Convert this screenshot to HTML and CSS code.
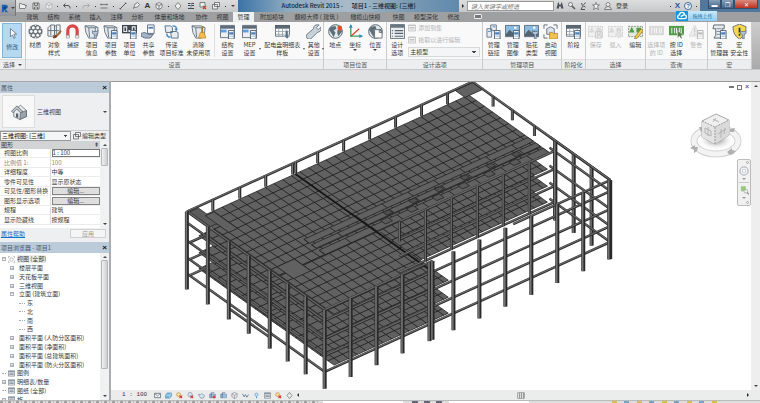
FILE: index.html
```html
<!DOCTYPE html>
<html lang="zh-CN">
<head>
<meta charset="utf-8">
<title>Autodesk Revit 2015</title>
<link rel="stylesheet" href="styles.css">
</head>
<body>
<svg class="sprite" aria-hidden="true">
  <symbol id="cursor" viewBox="0 0 16 16"><path d="M5 1v12l3-3 2 5 2-1-2-5h4z" fill="#fff" stroke="#4a5a6a"/></symbol>
  <symbol id="material" viewBox="0 0 16 16"><circle cx="8" cy="8" r="7.5" fill="#687078"/><g fill="#f4f6f8"><circle cx="8" cy="8" r="1.8"/><circle cx="3.5" cy="8" r="1.5"/><circle cx="12.5" cy="8" r="1.5"/><circle cx="5.7" cy="4" r="1.6"/><circle cx="10.3" cy="4" r="1.6"/><circle cx="5.7" cy="12" r="1.6"/><circle cx="10.3" cy="12" r="1.6"/><circle cx="8" cy="1.3" r=".8"/><circle cx="8" cy="14.7" r=".8"/><circle cx="2" cy="4.5" r=".8"/><circle cx="14" cy="4.5" r=".8"/><circle cx="2" cy="11.5" r=".8"/><circle cx="14" cy="11.5" r=".8"/></g></symbol>
  <symbol id="style" viewBox="0 0 16 16"><path d="M1 4l3-3h4v10l-2 2H1zM8 3l2-2h4v9l-2 2H8zM1 7h12M4 1v11M10 1v10" fill="#eef1f4" stroke="#667481"/><path d="M15 7l-5 6" stroke="#a76532" stroke-width="2"/><path d="M6 15q1-4 4-3l1 1q-1 3-5 2z" fill="#784020"/></symbol>
  <symbol id="magnet" viewBox="0 0 16 16"><path d="M3 14V7a5 5 0 0110 0v7" fill="none" stroke="#d84848" stroke-width="3.4"/><path d="M1.3 12h3.4v3H1.3zM11.3 12h3.4v3h-3.4z" fill="#eee" stroke="#888" stroke-width=".6"/></symbol>
  <symbol id="project" viewBox="0 0 16 16"><path d="M1 2h10l4 2-1 9-3 2H5L2 9z" fill="#e5e9ed" stroke="#687580"/><path d="M1 2l4 2h7l2-1M5 4l1 10M12 4v9" fill="none" stroke="#687580"/></symbol>
  <symbol id="wrenchmini" viewBox="0 0 16 16"><path d="M9 7v3l2 1v5h2v-5l2-1V7l-1 1h-4z" fill="#b5c5d8" stroke="#51677f" stroke-width=".7"/></symbol>
  <symbol id="sheetmini" viewBox="0 0 16 16"><path d="M9 7h6v9H9z" fill="#fff" stroke="#4b6076"/><path d="M10 9h4v2h-4zM10 13h4" fill="#4c83b9" stroke="#4c83b9" stroke-width=".6"/></symbol>
  <symbol id="units" viewBox="0 0 16 16"><path d="M0 1h16v9H0z" fill="#3f464d"/><path d="M2 3h3v5H2zM11 3h3v5h-3zM7.5 7h1v1h-1z" fill="none" stroke="#e8ecef" stroke-width="1.2"/></symbol>
  <symbol id="shared" viewBox="0 0 16 16"><path d="M7 1h7v9H7z" fill="#fff" stroke="#586b80"/><path d="M8 3h5v2H8z" fill="#4f7fae"/><path d="M0 10l4-1 4 2h5l-3 4H4l-4-2z" fill="#a5b4c4" stroke="#607083"/></symbol>
  <symbol id="transfer" viewBox="0 0 16 16"><path d="M1 2h6l2 2v5H2zM7 8h6l2 1v6H8z" fill="#e7edf2" stroke="#5b7185"/><path d="M9 2q5 0 4 4M3 10q0 4 4 4" fill="none" stroke="#4088c4" stroke-width="1.5"/><path d="M11 5h4l-2 3z" fill="#4088c4"/></symbol>
  <symbol id="broom" viewBox="0 0 16 16"><path d="M12 3v7" stroke="#ad6f28" stroke-width="1.6"/><path d="M10 9h4l2 6H8z" fill="#f1bd4d" stroke="#b78127" stroke-width=".7"/></symbol>
  <symbol id="window" viewBox="0 0 16 16"><path d="M.5 1.5h15v13H.5z" fill="#eef1f3" stroke="#65717d"/><path d="M1 2h14v3H1z" fill="#5e6c79"/><path d="M1 6h6v3H1z" fill="#5d9de0"/></symbol>
  <symbol id="table" viewBox="0 0 16 16"><path d="M.5 2h15v11H.5z" fill="#fff" stroke="#65717d"/><path d="M0 1h16v4H0z" fill="#596671"/><path d="M1 8h14M1 11h14M4 4v9M8 4v9M12 4v9" stroke="#8c98a4" stroke-width=".8"/></symbol>
  <symbol id="insert" viewBox="0 0 16 16"><path d="M11 7h3v5h2l-3 4-4-4h2z" fill="#5b7186" stroke="#fff" stroke-width=".5"/></symbol>
  <symbol id="wrench" viewBox="0 0 16 16"><path d="M14 1l-3 3 2 2 3-3q1 5-4 6L5 16q-2 1-4-1t0-4l7-6q0-5 6-4z" fill="#c9d2da" stroke="#596c7e" stroke-width=".9"/></symbol>
  <symbol id="globe" viewBox="0 0 16 16"><circle cx="8" cy="8" r="7.3" fill="#dfe8ec" stroke="#52616b"/><path d="M3 3l5-1 1 3-3 2 2 2-2 5-3-5-2-3zM10 6l4-1 1 3-4 5-1-3z" fill="#5d7079"/></symbol>
  <symbol id="pin" viewBox="0 0 16 16"><path d="M12 9l-2-5a2.5 2.5 0 015 0z" fill="#e14f2b"/></symbol>
  <symbol id="page" viewBox="0 0 16 16"><path d="M7 6h5l3 3v6H7z" fill="#fafafa" stroke="#66727d"/><path d="M12 6v3h3" fill="none" stroke="#66727d"/></symbol>
  <symbol id="axes" viewBox="0 0 16 16"><path d="M3 1v12h12" fill="none" stroke="#39a153" stroke-width="1.4"/><path d="M3 13l9-8" stroke="#d8402f" stroke-width="1.3"/><path d="M3 0L1 4h4zM16 13l-4-2v4z" fill="#3c82c4"/></symbol>
  <symbol id="options" viewBox="0 0 16 16"><path d="M.5 .5h15v15H.5z" fill="#e9edf0" stroke="#697681"/><path d="M1 1h14v3H1z" fill="#687681"/><path d="M5 7h9M5 10h9M5 13h9M2 7h1M2 10h1M2 13h1" stroke="#57646f" stroke-width="1.2"/></symbol>
  <symbol id="link" viewBox="0 0 16 16"><path d="M1 5h5v9H1zM5 1h6v6H5z" fill="#e9edf1" stroke="#67788a"/><path d="M2 8h3M7 3h3" stroke="#5790c5"/></symbol>
  <symbol id="image" viewBox="0 0 16 16"><path d="M.5 1.5h15v12H.5z" fill="#8bbbe0" stroke="#5f6e7c"/><path d="M1 11l4-5 3 3 3-2 4 4v2H1z" fill="#53636f"/><circle cx="11" cy="4" r="1.4" fill="#fff"/></symbol>
  <symbol id="startup" viewBox="0 0 16 16"><path d="M1 5V1h4M11 1h4v4M1 11v4h4" fill="none" stroke="#667"/><path d="M4 5l4-2 4 2v6H4z" fill="#dce2e8" stroke="#68798a"/><path d="M7 9h3l1 1h5v6H7z" fill="#f0c14c" stroke="#a77f25" stroke-width=".7"/></symbol>
  <symbol id="selection" viewBox="0 0 16 16"><path d="M.5 2.5h15v11H.5z" fill="#e2e9df" stroke="#8a968a" stroke-dasharray="2 1"/><path d="M1 9l3-6 3 6zM9 4h5v5H9z" fill="currentColor"/></symbol>
  <symbol id="pencil" viewBox="0 0 16 16"><path d="M14 5l-6 8-1 3 3-1 6-8z" fill="#f2cc4d" stroke="#9b7525" stroke-width=".8"/></symbol>
  <symbol id="save" viewBox="0 0 16 16"><path d="M8 8h7v7H8zM10 8v3h3V8M10 15v-3h4v3" fill="#ddd" stroke="#999"/></symbol>
  <symbol id="load" viewBox="0 0 16 16"><path d="M10 6h3v5h2l-4 4-3-4h2z" fill="#ccc" stroke="#999" stroke-width=".6"/></symbol>
  <symbol id="barcode" viewBox="0 0 16 16"><path d="M0 2h16v10H0z" fill="currentColor"/><path d="M3 4v6M6 4v6M8 4v6M11 4v6M13 4v6" stroke="#fff" stroke-width=".9"/></symbol>
  <symbol id="arrow" viewBox="0 0 16 16"><path d="M9 7v8l2-2 2 3 1-1-1-3h3z" fill="#4f7e46" stroke="#fff" stroke-width=".5"/></symbol>
  <symbol id="warn" viewBox="0 0 16 16"><path d="M6 1l6 12H0z" fill="#ddd" stroke="#bbb"/><path d="M6 4v5M6 10v2" stroke="#999" stroke-width="1.4"/></symbol>
  <symbol id="macro" viewBox="0 0 16 16"><path d="M2 1h11v4h-2v10H2l2-3V5H1z" fill="#e7eaed" stroke="#59656f"/><path d="M5 5h5M5 8h5M5 11h4" stroke="#7c8995"/></symbol>
  <symbol id="shield" viewBox="0 0 16 16"><path d="M8 0l7 3q0 9-7 13Q1 12 1 3z" fill="#f5d84b" stroke="#677079"/><path d="M8 4v5M8 10.5v2" stroke="#333" stroke-width="1.8"/></symbol>
  <symbol id="home" viewBox="0 0 24 24"><path d="M3 11L14 3l8 7v8l-9 4-8-4v-7z" fill="#e8eaec" stroke="#646c73"/><path d="M2 11l7-7 8 7-3 2-5-5-5 5z" fill="#bfc6cb" stroke="#596169"/><path d="M14 13l8-3v8l-9 4z" fill="#9aa4ac" stroke="#5d656d"/><path d="M8 14h3v6l-3-1z" fill="#56616a"/></symbol>
  <symbol id="glass" viewBox="0 0 16 16"><circle cx="5" cy="5" r="4" fill="#eee" stroke="#555" stroke-width="1.4"/><path d="M8 8l6 6" stroke="#555" stroke-width="3"/></symbol>
  <symbol id="binoculars" viewBox="0 0 16 16"><path d="M4 1h2v4h4V1h2l3 12h-5V9H6v4H1z" fill="#4d5359"/></symbol>
  <symbol id="star" viewBox="0 0 16 16"><path d="M8 1l2 5h5l-4 3 2 6-5-3-5 3 2-6-4-3h5z" fill="#f5f5f5" stroke="#555" stroke-width="1.3"/></symbol>
  <symbol id="user" viewBox="0 0 16 16"><circle cx="8" cy="5" r="4" fill="#eee" stroke="#555" stroke-width="1.3"/><path d="M1 15q1-6 7-6t7 6z" fill="#ddd" stroke="#555" stroke-width="1.3"/></symbol>
  <symbol id="dish" viewBox="0 0 16 16"><path d="M3 2q0 7 8 8M11 1L7 6M5 9l-3 6h8" fill="none" stroke="#555" stroke-width="2"/></symbol>
  <symbol id="folder" viewBox="0 0 16 16"><path d="M1 13V3h4l1 2h6v2h3l-3 6z" fill="#eee" stroke="#555" stroke-width="1.3"/></symbol>
  <symbol id="disk" viewBox="0 0 16 16"><path d="M2 2h12v12H2zM5 2v5h6V2M5 14v-4h6v4" fill="#eee" stroke="#555" stroke-width="1.6"/></symbol>
  <symbol id="cube" viewBox="0 0 16 16"><path d="M8 1l6 3v7l-6 4-6-4V4zM2 4l6 4 6-4M8 8v7" fill="#eee" stroke="currentColor" stroke-width="1.3"/></symbol>
  <symbol id="undo" viewBox="0 0 16 16"><path d="M5 3L1 7l4 4M1 7h9q5 0 4 6" fill="none" stroke="currentColor" stroke-width="2"/></symbol>
  <symbol id="measure" viewBox="0 0 16 16"><path d="M1 5h14M1 12h14M2 3v4M14 3v4" stroke="#666" stroke-width="1.6"/></symbol>
  <symbol id="slash" viewBox="0 0 16 16"><path d="M2 14L14 2M1 12l3 3M12 1l3 3" stroke="#555" stroke-width="2"/></symbol>
  <symbol id="tag" viewBox="0 0 16 16"><path d="M3 13l3-9 5-3 4 4-4 5-6 1z" fill="#eee" stroke="#555" stroke-width="1.4"/></symbol>
  <symbol id="section" viewBox="0 0 16 16"><path d="M8 1l6 7-6 7-6-7z" fill="#eee" stroke="#666" stroke-width="1.5"/></symbol>
  <symbol id="lines" viewBox="0 0 16 16"><path d="M2 3h5M2 7h5M2 13h12M9 3h5M9 7h5" stroke="#444" stroke-width="2"/><path d="M7 13L10 1" stroke="#4586bd" stroke-width="1.4"/></symbol>
  <symbol id="closeviews" viewBox="0 0 16 16"><path d="M2 1h10v9H2z" fill="#eee" stroke="#555" stroke-width="1.4"/><path d="M8 8l6 6M14 8l-6 6" stroke="#d83a32" stroke-width="2.5"/></symbol>
  <symbol id="switch" viewBox="0 0 16 16"><path d="M5 1h10v8H5zM1 5h10v9H1z" fill="#eee" stroke="#555" stroke-width="1.4"/></symbol>
  <symbol id="sheet" viewBox="0 0 16 16"><path d="M1 2h14v12H1z" fill="#eef1f4" stroke="#667381" stroke-width="1.4"/><path d="M1 3h14M3 7h10M3 10h10" stroke="#778491" stroke-width="2"/></symbol>
  <symbol id="detail" viewBox="0 0 16 16"><path d="M1 3h14v10H1z" fill="#f4f5f6" stroke="#5d6770" stroke-width="1.8"/><path d="M2 4l6 5 6-5" fill="none" stroke="#5d6770" stroke-width="1.6"/></symbol>
  <symbol id="viewicon" viewBox="0 0 16 16"><path d="M1 5V1h3M12 1h3v4M1 11v4h3M12 15h3v-4" fill="none" stroke="#777"/><circle cx="8" cy="8" r="4" fill="#fff" stroke="#777"/></symbol>
  <symbol id="box3d" viewBox="0 0 16 16"><path d="M1 7l4-5h10v7l-4 5H1z" fill="#73b8dd" stroke="#3b6c99"/><path d="M1 7h10l4-5M11 7v7" fill="none" stroke="#fff"/></symbol>
  <symbol id="sunoff" viewBox="0 0 16 16"><circle cx="6" cy="6" r="4.5" fill="#ffe49a" stroke="#bf8534" stroke-width="1.4"/><path d="M8 8l6 6M14 8l-6 6" stroke="#d7372f" stroke-width="2.4"/></symbol>
  <symbol id="shadowoff" viewBox="0 0 16 16"><circle cx="7" cy="6" r="5" fill="#dce8f1" stroke="#6d8598" stroke-width="1.4"/><path d="M8 8l6 6M14 8l-6 6" stroke="#d7372f" stroke-width="2.4"/></symbol>
  <symbol id="kettle" viewBox="0 0 16 16"><path d="M1 5l4 1q3-4 7 0l3 2-3 6H6L3 9z" fill="#dae6ee" stroke="#5a7f9b" stroke-width="1.3"/></symbol>
  <symbol id="crop" viewBox="0 0 16 16"><path d="M1 5h14v8H1z" fill="#9ec0df" stroke="#5379a1"/><path d="M5 14V2h7" stroke="#435e7e" fill="none" stroke-width="1.6"/></symbol>
  <symbol id="cross" viewBox="0 0 16 16"><path d="M9 9l5 5M14 9l-5 5" stroke="#d7372f" stroke-width="2.4"/></symbol>
  <symbol id="bulb" viewBox="0 0 16 16"><circle cx="8" cy="6" r="3.5" fill="#d8efff" stroke="#4187bd" stroke-width="1.4"/><path d="M7 10h2v4H7z" fill="#4187bd"/></symbol>
  <symbol id="glasses" viewBox="0 0 16 16"><path d="M1 4l4 7 3-5 3 6 4-6" fill="none" stroke="#5e7a8e" stroke-width="2"/></symbol>
</svg>

<header class="titlebar">
  <button class="app-button" aria-label="应用程序菜单"><svg viewBox="0 0 16 16"><path d="M3 14V2h6q5 1 3 5l-3 2 4 5H9L6 9v5z" fill="#1c5eb8"/><path d="M3 14l3-4V5h3q2 1 0 3L6 9" fill="#0b3d83"/></svg><i class="caret"></i></button>
  <nav class="quick" aria-label="快速访问">
    <svg><use href="#folder"/></svg><svg><use href="#disk"/></svg><svg class="dim"><use href="#cube"/></svg><i class="dot"></i><svg><use href="#undo"/></svg><i class="dot"></i><svg class="dim flip"><use href="#undo"/></svg><i class="dot"></i><svg><use href="#measure"/></svg><i class="dot"></i><svg><use href="#slash"/></svg><svg><use href="#tag"/></svg><b class="letter">A</b><svg><use href="#cube"/></svg><i class="dot"></i><svg><use href="#section"/></svg><svg><use href="#lines"/></svg><svg><use href="#closeviews"/></svg><svg><use href="#switch"/></svg><i class="dot"></i><i class="caret"></i>
  </nav>
  <h1 class="title"><span>Autodesk Revit 2015 -</span><span>项目1 - 三维视图: {三维}</span></h1>
  <div class="search"><i class="play"></i><input aria-label="搜索" placeholder="键入关键字或短语"></div>
  <nav class="account"><svg><use href="#binoculars"/></svg><svg><use href="#glass"/></svg><svg><use href="#dish"/></svg><svg><use href="#star"/></svg><svg><use href="#user"/></svg><a href="#login">登录</a></nav>
  <div class="help"><i class="dot"></i><b class="exchange">X</b><span class="question">?</span><i class="dot"></i></div>
  <div class="wincontrols"><button aria-label="最小化">▬</button><button aria-label="还原">❐</button><button class="close" aria-label="关闭">✕</button></div>
  <button class="upload"><i><svg viewBox="0 0 16 16"><path d="M4 12a3 3 0 010-6 4 4 0 018 0 3 3 0 010 6zM6 9l5-3" fill="none" stroke="#fff" stroke-width="2"/></svg></i><span>拖拽上传</span></button>
</header>

<nav class="tabs">
  <a href="#t">建筑</a><a href="#t">结构</a><a href="#t">系统</a><a href="#t">插入</a><a href="#t">注释</a><a href="#t">分析</a><a class="wide" href="#t">体量和场地</a><a href="#t">协作</a><a href="#t">视图</a><a class="active" href="#t">管理</a><a class="addon" href="#t">附加模块</a><a class="master" href="#t">翻模大师 ( 建筑 )</a><a class="olive" href="#t">橄榄山快模</a><a href="#t">快图</a><a class="deep" href="#t">模型深化</a><a href="#t">修改</a><span class="tabmenu"></span>
</nav>

<section class="ribbon">
  <div class="panel p-select"><div class="tools"><button class="modify"><svg><use href="#cursor"/></svg><span>修改</span></button></div><h2>选择 <i class="caret"></i></h2></div>
  <div class="panel p-settings"><div class="tools">
    <button><svg><use href="#material"/></svg><span>材质</span></button>
    <button><svg><use href="#style"/></svg><span>对象<br>样式</span></button>
    <button><svg><use href="#magnet"/></svg><span>捕捉</span></button>
    <button><svg><use href="#project"/><use href="#wrenchmini"/></svg><span>项目<br>信息</span></button>
    <button><svg><use href="#project"/><use href="#sheetmini"/></svg><span>项目<br>参数</span></button>
    <button><svg><use href="#units"/><use href="#sheetmini"/></svg><span>项目<br>单位</span></button>
    <button><svg><use href="#shared"/></svg><span>共享<br>参数</span></button>
    <button class="w27"><svg><use href="#transfer"/></svg><span>传递<br>项目标准</span></button>
    <button class="w27"><svg><use href="#project"/><use href="#broom"/></svg><span>清除<br>未使用项</span></button>
    <i class="divider"></i>
    <button class="w22"><svg><use href="#window"/><use href="#sheetmini"/></svg><span>结构<br>设置</span></button>
    <button class="w22 more"><svg><use href="#window"/><use href="#sheetmini"/></svg><span>MEP<br>设置</span></button>
    <button class="w44 more"><svg><use href="#table"/><use href="#insert"/></svg><span>配电盘明细表<br>样板</span></button>
    <button class="more"><svg><use href="#wrench"/></svg><span>其他<br>设置</span></button>
  </div><h2>设置</h2></div>
  <div class="panel p-location"><div class="tools">
    <button><svg><use href="#globe"/><use href="#pin"/></svg><span>地点</span></button>
    <button><svg><use href="#axes"/></svg><span>坐标</span><i class="caret"></i></button>
    <button><svg><use href="#globe"/><use href="#page"/></svg><span>位置</span><i class="caret"></i></button>
  </div><h2>项目位置</h2></div>
  <div class="panel p-design"><div class="tools">
    <button><svg><use href="#options"/></svg><span>设计<br>选项</span></button>
    <div class="stack"><button disabled><svg><use href="#sheet"/></svg>添加到集</button><button disabled><svg><use href="#sheet"/></svg>拾取以进行编辑</button><select aria-label="设计选项"><option>主模型</option></select></div>
  </div><h2>设计选项</h2></div>
  <div class="panel p-manage"><div class="tools">
    <button><svg><use href="#link"/><use href="#sheetmini"/></svg><span>管理<br>链接</span></button>
    <button><svg><use href="#image"/><use href="#sheetmini"/></svg><span>管理<br>图像</span></button>
    <button><svg><use href="#image"/><use href="#wrenchmini"/></svg><span>贴花<br>类型</span></button>
    <button><svg><use href="#startup"/></svg><span>启动<br>视图</span></button>
  </div><h2>管理项目</h2></div>
  <div class="panel p-phase"><div class="tools"><button><svg><use href="#table"/><use href="#sheetmini"/></svg><span>阶段</span></button></div><h2>阶段化</h2></div>
  <div class="panel p-set"><div class="tools">
    <button disabled><svg><use href="#selection"/><use href="#save"/></svg><span>保存</span></button>
    <button disabled><svg><use href="#selection"/><use href="#load"/></svg><span>载入</span></button>
    <button><svg class="green"><use href="#selection"/><use href="#pencil"/></svg><span>编辑</span></button>
  </div><h2>选择</h2></div>
  <div class="panel p-query"><div class="tools">
    <button disabled><svg><use href="#barcode"/></svg><span>选择项<br>的 ID</span></button>
    <button><svg class="green"><use href="#barcode"/><use href="#arrow"/></svg><span>按 ID<br>选择</span></button>
    <button disabled><svg><use href="#warn"/><use href="#sheetmini"/></svg><span>警告</span></button>
  </div><h2>查询</h2></div>
  <div class="panel p-macro"><div class="tools">
    <button><svg><use href="#macro"/><use href="#sheetmini"/></svg><span>宏<br>管理器</span></button>
    <button><svg><use href="#shield"/><use href="#wrenchmini"/></svg><span>宏<br>安全性</span></button>
  </div><h2>宏</h2></div>
</section>

<main class="workspace">
  <aside class="sidebar">
    <section class="properties">
      <h2 class="palette-title">属性 <button aria-label="关闭属性">×</button></h2>
      <div class="type"><span class="thumb"><svg><use href="#home"/></svg></span><span>三维视图</span><i class="caret"></i></div>
      <div class="instance"><select aria-label="实例"><option>三维视图: {三维}</option></select><button><svg><use href="#switch"/></svg>编辑类型</button></div>
      <div class="scrollbox">
        <div class="propview">
          <h3>图形 <span>⇞</span></h3>
          <table>
            <tr><th><label for="scale">视图比例</label></th><td><input id="scale" value="1 : 100"></td></tr>
            <tr class="muted"><th>比例值 1:</th><td>100</td></tr>
            <tr><th>详细程度</th><td>中等</td></tr>
            <tr><th>零件可见性</th><td>显示原状态</td></tr>
            <tr><th>可见性/图形替换</th><td><button>编辑...</button></td></tr>
            <tr><th>图形显示选项</th><td><button>编辑...</button></td></tr>
            <tr><th>规程</th><td>建筑</td></tr>
            <tr><th>显示隐藏线</th><td>按规程</td></tr>
          </table>
        </div>
        <div class="scrollbar"><i class="up"></i><b class="short"></b><i class="caret"></i></div>
      </div>
      <footer><a href="#help">属性帮助</a><button disabled>应用</button></footer>
    </section>
    <section class="browser">
      <h2 class="palette-title">项目浏览器 - 项目1 <button aria-label="关闭项目浏览器">×</button></h2>
      <div class="scrollbox">
        <ul class="tree">
          <li><i class="node">−</i><svg><use href="#viewicon"/></svg><span class="current">视图 (全部)</span></li>
          <li class="l1"><i class="node">+</i><span>楼层平面</span></li>
          <li class="l1"><i class="node">+</i><span>天花板平面</span></li>
          <li class="l1"><i class="node">+</i><span>三维视图</span></li>
          <li class="l1"><i class="node">−</i><span>立面 (建筑立面)</span></li>
          <li class="l2"><span>东</span></li><li class="l2"><span>北</span></li><li class="l2"><span>南</span></li><li class="l2"><span>西</span></li>
          <li class="l1"><i class="node">+</i><span>面积平面 (人防分区面积)</span></li>
          <li class="l1"><i class="node">+</i><span>面积平面 (净面积)</span></li>
          <li class="l1"><i class="node">+</i><span>面积平面 (总建筑面积)</span></li>
          <li class="l1"><i class="node">+</i><span>面积平面 (防火分区面积)</span></li>
          <li><i class="leaf"></i><svg><use href="#sheet"/></svg><span>图例</span></li>
          <li><i class="node">+</i><svg><use href="#sheet"/></svg><span>明细表/数量</span></li>
          <li><i class="leaf"></i><svg><use href="#sheet"/></svg><span>图纸 (全部)</span></li>
          <li><i class="node">+</i><svg><use href="#sheet"/></svg><span>族</span></li>
        </ul>
        <div class="scrollbar"><i class="up"></i><b class="long"></b><i class="caret"></i></div>
      </div>
    </section>
  </aside>

  <section class="viewport">
    <div class="canvas">
      <svg id="model" viewBox="111 83 641 307" role="img" aria-label="三维结构模型"></svg>
      <div class="viewctl"><i class="min"></i><i class="max"></i><i class="shut">×</i></div>
      <svg class="viewcube" viewBox="0 0 54 48">
        <defs><radialGradient id="shade"><stop offset="0" stop-color="#777"/><stop offset="1" stop-color="#fff" stop-opacity="0"/></radialGradient></defs>
        <ellipse cx="27" cy="30" rx="22" ry="13" fill="none" stroke="#d2d2d2" stroke-width="7"/><ellipse cx="27" cy="30" rx="22" ry="13" fill="none" stroke="#f3f3f3" stroke-width="5"/>
        <ellipse cx="27" cy="29" rx="18" ry="10" fill="url(#shade)"/>
        <path d="M1 37l5-3v2h3l-1 4-3 2v-3zM38 41l5-4v2l4 1-3 3-3 1zM10 16h5v5h-3zM41 18l5-1-1 4h-4z" fill="#b0b0b0"/>
        <path d="M13 10l14-7 13 6v15l-14 9-13-7z" fill="#f0f0f0" stroke="#aaa"/>
        <path d="M13 10l13 6v17l-13-7z" fill="#e4e4e4"/><path d="M26 16l14-7v15l-14 9z" fill="#dadada"/><path d="M13 10l13 6 14-7M26 16v17" fill="none" stroke="#999" stroke-dasharray="2 1"/>
        <path d="M24 8l6 3M27 7l-3 4M16 17l6 3v5l-6-3zM19 16v9M29 23l8-5M32 18v9M36 17l-1 6" fill="none" stroke="#b2b2b2"/>
      </svg>
      <div class="navbar"><i></i><svg viewBox="0 0 16 16"><circle cx="8" cy="8" r="6.5" fill="#f7f7f7" stroke="#b4bbc4" stroke-width="2"/><circle cx="8" cy="8" r="3" fill="#fff" stroke="#a8b0bb"/></svg><i class="caret"></i><hr><svg viewBox="0 0 16 16"><path d="M3 2h8v8H3z" fill="#99ca82"/><circle cx="11" cy="10" r="3" fill="#eee" stroke="#999"/><path d="M13 12l3 3" stroke="#888" stroke-width="2"/></svg><i class="caret"></i><i></i></div>
    </div>
    <div class="vscroll"><i class="up"></i><i class="caret"></i></div>
    <footer class="viewbar"><span class="scale">1 : 100</span><svg><use href="#detail"/></svg><svg><use href="#box3d"/></svg><svg><use href="#sunoff"/></svg><svg><use href="#shadowoff"/></svg><svg><use href="#kettle"/></svg><svg><use href="#crop"/><use href="#cross"/></svg><svg><use href="#crop"/></svg><svg><use href="#cube"/></svg><svg><use href="#glasses"/></svg><svg><use href="#bulb"/></svg><svg><use href="#sheet"/></svg><svg><use href="#sunoff"/></svg><svg><use href="#section"/></svg><i class="back"></i><div class="hscroll"><b></b><i class="play"></i></div></footer>
  </section>
</main>
<footer class="status"><i class="hint"></i><i class="field"></i><i class="marks"></i><i class="field"></i><i class="filters"></i></footer>
<script src="model.js"></script>
</body>
</html>
```
FILE: styles.css
```css
* { box-sizing: border-box; }
html, body { height: 100%; }
body { margin: 0; display: flex; flex-direction: column; overflow: hidden; background: #dfe1e3; color: #3a3a3a; font: 6px/8px "Noto Sans CJK SC", "Liberation Sans", sans-serif; }
h1, h2, h3, ul, table { margin: 0; padding: 0; font: inherit; }
button, input, select { margin: 0; padding: 0; border: 0; border-radius: 0; background: none; color: inherit; font: inherit; min-width: 0; }
a { color: inherit; text-decoration: none; }
svg { display: block; flex: none; }
.sprite { position: absolute; width: 0; height: 0; }
.caret { border: 2px solid transparent; border-top: 2px solid #444; border-bottom: 0; width: 0; height: 0; flex: none; }
.up { border: 2px solid transparent; border-bottom: 2px solid #444; border-top: 0; width: 0; height: 0; }
.play { border: 2px solid transparent; border-left: 2px solid #222; border-right: 0; width: 0; height: 0; }
.dot { width: 1px; height: 1px; background: #333; flex: none; }

.titlebar { position: relative; z-index: 2; display: flex; flex: none; height: 12px; background: linear-gradient(#dcdddd, #c6c8ca); }
.app-button { display: flex; align-items: center; justify-content: center; gap: 1px; width: 16px; height: 16px; margin-bottom: -4px; background: linear-gradient(#b9bcc0, #8f9398); border-right: 1px solid #777; }
.app-button svg { width: 10px; height: 13px; }
.quick { display: flex; align-items: center; justify-content: space-between; width: 222px; padding: 0 3px; color: #555; }
.quick svg, .account svg { width: 8px; height: 8px; }
.quick .dim { color: #aaa; }
.flip { transform: scaleX(-1); }
.letter { font: bold 8px/10px "Liberation Sans", sans-serif; color: #333; }
.title { flex: 1; display: flex; align-items: center; justify-content: center; gap: 9px; overflow: hidden; background: linear-gradient(90deg, #3b73a7, #8caac0 22%, #a8bac8 50%, #7698b2 80%, #6089ad); color: #102438; font-weight: 500; line-height: 10px; white-space: nowrap; }
.search { display: flex; align-items: center; gap: 3px; width: 95px; padding-left: 3px; }
.search input { flex: 1; height: 10px; padding: 0 3px; border: 1px solid #999; background: #fff; font-style: italic; }
.account { display: flex; align-items: center; gap: 4px; width: 76px; padding-left: 2px; white-space: nowrap; }
.help { display: flex; align-items: center; justify-content: flex-end; gap: 4px; width: 70px; padding-right: 3px; }
.exchange { color: #2756a5; font: bold 8px/10px "Liberation Sans", sans-serif; }
.question { width: 8px; height: 8px; border: 1px solid #3e6593; border-radius: 50%; color: #245c9c; background: #fff; font: bold 6px/6px "Liberation Sans", sans-serif; text-align: center; }
.wincontrols { display: flex; align-items: flex-start; width: 60px; padding: 0 2px 0 8px; background: #52779c; }
.wincontrols button { flex: 1; height: 9px; border: 1px solid #35506e; border-top: 0; background: linear-gradient(#86a2bd, #3f6489); color: #fff; font-size: 6px; line-height: 7px; }
.wincontrols .close { flex: 2; background: linear-gradient(#dc8a7d, #bd301e); }
.upload { position: absolute; top: 11px; right: 43px; display: flex; width: 41px; height: 10px; background: linear-gradient(#c8e9fc, #8fcdf1); color: #3272a4; line-height: 10px; font-size: 5px; }
.upload i { width: 12px; background: #1495dc; }
.upload svg { width: 10px; height: 10px; margin: 0 auto; }
.upload span { flex: 1; }

.tabs { display: flex; flex: none; height: 10px; padding-left: 22px; background: #9d9fa1; color: #333; line-height: 10px; text-align: center; }
.tabs a { width: 21px; white-space: nowrap; }
.tabs .wide { width: 43px; }
.tabs .active { background: #eef0f1; }
.tabs .addon { width: 36px; }
.tabs .master { width: 53px; }
.tabs .olive { width: 45px; }
.tabs .deep { width: 34px; }
.tabmenu { width: 8px; height: 5px; margin: 2px 10px; border: 1px solid #eee; border-radius: 1px; background: #777; }

.ribbon { display: flex; flex: none; height: 48px; padding-right: 8px; background: linear-gradient(#ccc, #aaa); border-bottom: 1px solid #c6c8ca; }
.panel { display: flex; flex-direction: column; min-width: 0; background: #f9f9fa; border-right: 1px solid #c9cbcd; }
.p-select { flex: 25 1 0; }
.p-settings { flex: 301 1 0; }
.p-location { flex: 63 1 0; }
.p-design { flex: 96 1 0; }
.p-manage { flex: 79 1 0; }
.p-phase { flex: 23 1 0; }
.p-set { flex: 60 1 0; }
.p-query { flex: 61 1 0; }
.p-macro { flex: 44 1 0; }
.tools { flex: 1; display: flex; justify-content: center; min-width: 0; }
.panel h2 { height: 10px; background: #edeeef; border-top: 1px solid #dddfe0; line-height: 9px; text-align: center; white-space: nowrap; color: #555; }
.p-select h2 { display: flex; align-items: center; justify-content: space-evenly; }
.tools > button { flex: 0 1 20px; display: flex; flex-direction: column; align-items: center; padding-top: 2px; line-height: 8px; white-space: nowrap; }
.p-settings .tools > button, .p-manage .tools > button { flex-basis: 19px; }
.tools > button > svg { width: 15px; height: 15px; margin-bottom: 2px; }
.p-settings .tools > .w27 { flex-basis: 27px; }
.p-settings .tools > .w22 { flex-basis: 22px; }
.p-settings .tools > .w44 { flex-basis: 44px; }
.tools > button > span { display: block; }
.tools .divider { width: 1px; margin: 2px 2px; background: #dcdfe1; }
.more { position: relative; }
.more::after { content: ""; position: absolute; right: -1px; bottom: 8px; border: 1px solid transparent; border-top: 2px solid #555; }
.tools button:disabled { color: #b4b4b4; }
.tools button:disabled svg { opacity: .45; filter: grayscale(1); }
.green { color: #509a48; }
.tools > .modify { margin: 1px 0; background: #b5d9f1; border: 1px solid #84b6da; color: #335d80; }
.modify svg { padding: 2px; }
.stack { flex: 1; display: flex; flex-direction: column; padding: 1px 2px 1px 1px; gap: 2px; }
.stack button { display: flex; align-items: center; gap: 2px; height: 10px; white-space: nowrap; }
.stack svg { width: 8px; height: 8px; }
select { appearance: none; background: linear-gradient(45deg, transparent 50%, #444 50%) right 5px center / 2px 2px no-repeat, linear-gradient(-45deg, transparent 50%, #444 50%) right 3px center / 2px 2px no-repeat, #f4f5f6; border: 1px solid #d8d9da; }
.stack select { height: 10px; padding-left: 1px; }

.workspace { flex: 1; display: flex; min-height: 0; padding-top: 11px; }
.sidebar { flex: none; width: 111px; display: flex; flex-direction: column; gap: 3px; border-right: 2px solid #aaadb0; border-top: 1px solid #a7a9ab; background: #eeeff0; }
.properties { flex: none; height: 157px; display: flex; flex-direction: column; }
.browser { flex: 1; min-height: 0; display: flex; flex-direction: column; }
.palette-title { flex: none; display: flex; justify-content: space-between; align-items: center; height: 11px; padding: 0 2px 0 1px; background: #bccbda; color: #4a5a69; }
.palette-title button { color: #111; font: bold 8px/8px "Liberation Sans", sans-serif; }
.type { display: flex; align-items: center; gap: 2px; height: 37px; padding: 0 2px; }
.thumb { display: grid; place-items: center; width: 33px; height: 33px; border: 1px solid #ddd; background: #f8f8f8; }
.thumb svg { width: 18px; height: 18px; }
.type .caret { margin-left: auto; }
.instance { display: flex; gap: 2px; height: 11px; border-top: 1px solid #ccc; }
.instance select { width: 71px; padding-left: 1px; border-color: #999; color: #111; }
.instance button { flex: 1; display: flex; align-items: center; gap: 1px; white-space: nowrap; }
.instance svg { width: 8px; height: 8px; }
.scrollbox { flex: 1; display: flex; min-height: 0; }
.propview { flex: 1; overflow: hidden; background: #fff; }
.properties h3 { display: flex; justify-content: space-between; height: 8px; padding: 0 1px; background: #d2d3d4; line-height: 8px; }
table { width: 100%; height: 76px; border-collapse: collapse; table-layout: fixed; line-height: 8px; }
th, td { padding: 0; border-bottom: 1px solid #ececec; font-weight: normal; text-align: left; white-space: nowrap; vertical-align: middle; }
th { width: 50%; padding-left: 4px; border-right: 1px solid #ddd; }
td { padding-left: 1px; }
td input { display: block; width: 100%; height: 8px; padding-left: 1px; outline: 1px solid #777; outline-offset: -1px; font-size: 6px; }
td button { display: block; width: 100%; height: 8px; border: 1px solid #858585; background: #dedede; line-height: 6px; }
.muted { color: #888; }
.scrollbar { flex: none; width: 9px; display: flex; flex-direction: column; align-items: center; padding: 3px 0; background: #f0f1f1; }
.scrollbar b { width: 7px; margin: 2px 0 auto; border: 1px solid #b5b8bb; border-radius: 1px; background: linear-gradient(90deg, #f0f0f0, #ccced0); }
.short { height: 18px; }
.long { height: 77%; }
.properties footer { flex: none; display: flex; justify-content: space-between; align-items: center; height: 11px; padding: 0 3px 0 1px; }
.properties footer a { color: #1670c7; text-decoration: underline; }
.properties footer button { width: 36px; height: 9px; border: 1px solid #d0d1d2; background: #f5f5f5; color: #999; line-height: 7px; }
.tree { flex: 1; min-width: 0; overflow: hidden; display: grid; grid-auto-rows: 1fr; padding: 2px 0 0 2px; background: #fff; list-style: none; line-height: 8px; height: 151px; }
.tree li { display: flex; align-items: center; gap: 2px; min-height: 0; overflow: hidden; white-space: nowrap; }
.tree .l1 { padding-left: 8px; gap: 5px; }
.tree .l2 { padding-left: 17px; gap: 2px; }
.tree .l2::before { content: ""; width: 6px; border-top: 1px dotted #aaa; }
.tree svg { width: 7px; height: 7px; }
.node { flex: none; width: 4px; height: 4px; border: 1px solid #aab1b8; font: 4px/2px "Liberation Sans", sans-serif; text-align: center; overflow: hidden; }
.leaf { width: 4px; border-top: 1px dotted #aaa; }
.current { background: #ececec; }

.viewport { flex: 1; min-width: 0; display: grid; grid-template: minmax(0, 1fr) 10px / minmax(0, 1fr) 9px; border-top: 1px solid #999; }
.canvas { position: relative; background: #fff; min-height: 0; }
#model { width: 100%; height: 100%; }
.viewctl { position: absolute; right: 2px; top: 2px; display: flex; gap: 3px; align-items: center; }
.min { width: 5px; height: 2px; background: #777; }
.max { width: 5px; height: 5px; border: 1px solid #777; }
.shut { font: bold 7px/6px "Liberation Sans", sans-serif; color: #666; }
.viewcube { position: absolute; right: 8px; top: 29px; width: 54px; height: 48px; }
.navbar { position: absolute; right: 0; top: 77px; width: 14px; height: 47px; display: flex; flex-direction: column; align-items: center; justify-content: space-between; padding: 1px; border: 1px solid #bbb; border-radius: 2px; background: #f1f1f1; }
.navbar svg { width: 10px; height: 10px; }
.navbar hr { width: 10px; margin: 0; border: 0; border-top: 1px solid #ccc; }
.navbar i:not(.caret) { align-self: flex-end; width: 3px; height: 3px; border: 1px solid #aaa; border-radius: 50%; }
.navbar .caret { border-top-color: #999; }
.vscroll { display: flex; flex-direction: column; align-items: center; justify-content: space-between; padding: 3px 0; background: #eee; }
.viewbar { grid-column: 1 / -1; display: flex; align-items: center; gap: 4px; padding-left: 11px; background: #ebecec; font-size: 6px; }
.viewbar svg { width: 7px; height: 7px; color: #778; }
.scale { width: 28px; font-family: "Liberation Mono", monospace; white-space: nowrap; }
.back { border: 2px solid transparent; border-right: 2px solid #333; border-left: 0; }
.hscroll { flex: 1; display: flex; align-items: center; justify-content: space-between; padding-right: 11px; }
.hscroll b { width: 8px; height: 7px; margin-left: 48%; border: 1px solid #aaa; border-radius: 1px; background: repeating-linear-gradient(90deg, #ddd 0 1px, #999 1px 2px); }
.status { flex: none; display: flex; gap: 3px; height: 3px; border-top: 1px solid #bbb; background: #dcdddd; }
.status .hint { width: 320px; background: repeating-linear-gradient(90deg, #777 0 3px, #ddd 3px 5px, #999 5px 6px, #ddd 6px 8px); opacity: .6; }
.status .field { width: 80px; background: #fff; }
.status .marks { width: 40px; background: repeating-linear-gradient(90deg, #ddd 0 6px, #667 6px 12px); }
.status .filters { flex: 1; margin: 0 40px 0 80px; background: repeating-linear-gradient(90deg, #d9bb50 0 5px, #ddd 5px 12px, #77a5c8 12px 17px, #ddd 17px 25px); }
```
FILE: model.js
```js
const svg = document.getElementById('model');
const parts = [];

// s runs along the long side, t along the short side, z downwards from the roof rail.
const pt = (s, t, z = 0) => [187 + 286 * s + 138 * t, 212 - 130 * s + 98.5 * t + z];
const str = p => p.map(v => v.toFixed(1)).join(' ');
const poly = (points, fill) => parts.push(`<path d="M${points.map(str).join('L')}Z" fill="${fill}" stroke="#242424" stroke-width=".8"/>`);
const line = (a, b, color, width) => parts.push(`<path d="M${str(a)}L${str(b)}" stroke="${color}" stroke-width="${width}" fill="none"/>`);
const beam = (a, b) => { line(a, b, '#2b2b2b', 2.5); line([a[0], a[1] - .3], [b[0], b[1] - .3], '#6a6a6a', 1.2); };
const column = (x, top, bottom, w = 4) => {
  parts.push(`<rect x="${x - w / 2}" y="${top}" width="${w}" height="${bottom - top}" fill="#292929"/>`);
  parts.push(`<rect x="${x - w / 2 + .6}" y="${top}" width="${w * .4}" height="${bottom - top}" fill="#747474"/>`);
};

const STEP_S = 1 / 33, STEP_T = 1 / 17;
function slab(s0, s1, t0, t1, z) {
  poly([pt(s0, t0, z), pt(s1, t0, z), pt(s1, t1, z), pt(s0, t1, z)], '#616161');
  for (let s = Math.ceil(s0 / STEP_S) * STEP_S; s < s1; s += STEP_S) line(pt(s, t0, z), pt(s, t1, z), '#222', .9);
  for (let t = Math.ceil(t0 / STEP_T) * STEP_T; t < t1; t += STEP_T) line(pt(s0, t, z), pt(s1, t, z), '#222', .9);
}

const levels = [62, 46, 29, 11];
const rightBays = [0, .15, .29, .45, .6, .735, .865, 1];

// Far right end frame
for (const t of rightBays.slice(4)) { const [x, y] = pt(1, t); column(x, y, y + 79, 4); }
for (const z of [0, 11, 29, 46, 62]) beam(pt(1, .56, z), pt(1, 1, z));

// Floor slabs from the lowest level to the roof
for (const z of levels) {
  const roof = z === 11;
  slab(.04, .985, .004, roof ? .594 : .575, z);
  slab(.04, roof ? .378 : .44, roof ? .594 : .5, .985, z);
}

// Long strips and joints on the roof
const z = 11;
for (const [a, b] of [[.435, .475], [.49, .525], [.545, .59]]) {
  poly([pt(.2, a, z), pt(.985, a, z), pt(.985, b, z), pt(.2, b, z)], '#616161');
  for (let s = .2; s < .98; s += 3 * STEP_S) line(pt(s, a, z), pt(s, b, z), '#252525', .9);
}
for (let s = .42; s < .95; s += .09) {
  poly([pt(s, .535, z), pt(s + .025, .535, z), pt(s + .025, .57, z), pt(s, .57, z)], '#5a5a5a');
  poly([pt(s + .03, .49, z), pt(s + .05, .49, z), pt(s + .05, .52, z), pt(s + .03, .52, z)], '#505050');
}
line(pt(.378, .004, z), pt(.378, 1, z), '#171717', 1.8);
poly([pt(.005, .01), pt(.035, .01), pt(.035, .16), pt(.005, .16)], '#5c5c5c');
poly([pt(.06, .01, z), pt(.09, .01, z), pt(.09, .18, z), pt(.06, .18, z)], '#616161');
poly([pt(.06, .53, z), pt(.12, .53, z), pt(.12, .65, z), pt(.06, .65, z)], '#616161');

// Rear and right parapets
beam(pt(0, 0), pt(1, 0));
beam(pt(1, 0), pt(1, 1));
for (const x of [213, 240, 266, 293, 296, 318, 344, 370, 396, 422, 448]) { const y = pt((x - 187) / 286, 0)[1]; column(x, y, y + 11, 3); }
for (const t of rightBays.slice(1, 4)) { const [x, y] = pt(1, t); column(x, y, y + 10, 3); }
poly([pt(.94, 0, 1), pt(1, 0, 1), pt(1, .07, 1), pt(.94, .07, 1)], '#616161');

// Recessed face
for (const level of [11, 29, 46, 62]) beam(pt(.458, .594, level), pt(1, .594, level));
for (const x of [400, 426, 452, 478, 504, 530]) {
  const y = pt((x - 269) / 286, .594)[1];
  column(x, y + 11, x === 400 ? 242 : y + 63, 3);
}
column(556, 142, 221, 4);

// Left end
for (const level of [0, 11, 29, 46, 62]) beam(pt(0, 0, level), pt(0, 1, level));
for (const level of [29, 46, 62]) beam(pt(0, .02, level), pt(.05, .02, level));
beam([229, 309], [270, 338]);
for (const x of [187, 208, 229, 249, 270, 288, 306]) { const y = 212 + (x - 187) * .714; column(x, y, y + 78); }

// Long front side
for (const level of [11, 29, 46, 62]) beam(pt(0, 1, level), pt(1, 1, level));
beam(pt(0, 1), pt(.378, 1));
beam(pt(.66, 1), pt(1, 1));
for (const x of [325, 351, 377, 403, 430, 433, 454, 480, 506, 532, 558, 584, 610]) {
  const y = 310.5 - (x - 325) * .4545;
  column(x, y, y + 79);
}
svg.innerHTML = parts.join('');
```
